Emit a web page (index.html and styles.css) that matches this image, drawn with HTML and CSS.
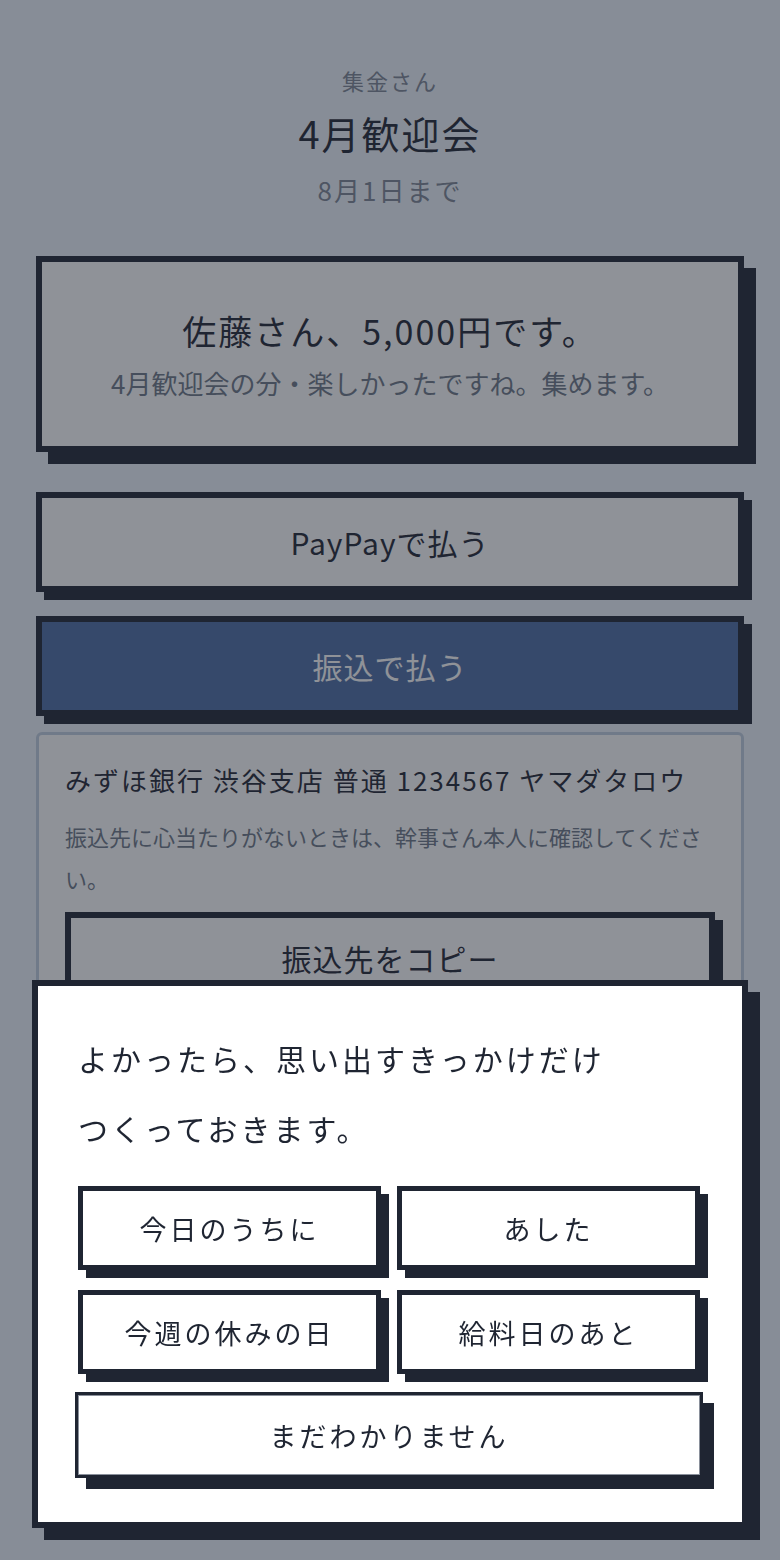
FILE: index.html
```html
<!DOCTYPE html>
<html lang="ja">
<head>
<meta charset="UTF-8">
<meta name="viewport" content="width=device-width, initial-scale=1.0">
<title>集金さん - 4月歓迎会</title>
<link rel="stylesheet" href="styles.css">
</head>
<body>
    <main class="page">
        <header class="head">
            <p class="eyebrow">集金さん</p>
            <h1 class="title">4月歓迎会</h1>
            <p class="deadline">8月1日まで</p>
        </header>

        <section class="bill">
            <p class="bill-amount">佐藤さん、5,000円です。</p>
            <p class="bill-note">4月歓迎会の分・楽しかったですね。集めます。</p>
        </section>

        <button class="btn">PayPayで払う</button>
        <button class="btn btn-primary">振込で払う</button>

        <div class="bank">
            <p class="bank-account">みずほ銀行 渋谷支店 普通 1234567 ヤマダタロウ</p>
            <p class="bank-hint">振込先に心当たりがないときは、幹事さん本人に確認してください。</p>
            <button class="btn btn-copy">振込先をコピー</button>
        </div>
    </main>

    <div class="overlay"></div>

    <div class="sheet">
        <p class="sheet-text">よかったら、思い出すきっかけだけ<br>つくっておきます。</p>
        <div class="choices">
            <button class="choice">今日のうちに</button>
            <button class="choice">あした</button>
            <button class="choice">今週の休みの日</button>
            <button class="choice">給料日のあと</button>
            <button class="choice choice-wide">まだわかりません</button>
        </div>
    </div>
</body>
</html>
```

FILE: styles.css
```css
body {
    font-family: "Noto Sans CJK JP", "Noto Sans", sans-serif;
    background: #eff5fc;
    color: #1f2532;
    margin: 0;
    padding: 0;
}
p, h1 {
    margin: 0;
}
.page {
    padding: 64px 36px 80px;
}
.head {
    text-align: center;
}
.eyebrow {
    font-size: 22px;
    line-height: 32px;
    letter-spacing: 2px;
    color: #7d8594;
}
.title {
    margin-top: 11px;
    font-size: 38px;
    line-height: 52px;
    font-weight: 400;
    letter-spacing: 2px;
}
.deadline {
    margin-top: 13px;
    font-size: 26px;
    line-height: 36px;
    letter-spacing: 2px;
    color: #7d8594;
}
.bill {
    margin-top: 48px;
    background: #fff;
    border: 6px solid #1f2532;
    box-shadow: 12px 12px 0 #1f2532;
    padding: 45px 24px;
    text-align: center;
}
.bill-amount {
    font-size: 34px;
    line-height: 48px;
    letter-spacing: 2px;
}
.bill-note {
    margin-top: 10px;
    font-size: 26px;
    line-height: 36px;
    color: #6d7786;
}
.btn {
    display: block;
    width: 100%;
    height: 100px;
    margin: 40px 0 0;
    background: #fff;
    border: 6px solid #1f2532;
    box-shadow: 8px 8px 0 #1f2532;
    font-family: inherit;
    font-size: 30px;
    letter-spacing: 1px;
    color: #1f2532;
    cursor: pointer;
}
.btn-primary {
    margin-top: 24px;
    background: #4d6da4;
    color: #fff;
}
.bank {
    margin-top: 16px;
    background: #fff;
    border: 3px solid #c1cfe0;
    border-radius: 6px;
    padding: 25px 26px 26px;
}
.bank-account {
    font-size: 26px;
    line-height: 40px;
    letter-spacing: 2px;
}
.bank-hint {
    margin-top: 15px;
    font-size: 22px;
    line-height: 42px;
    color: #6d7786;
}
.btn-copy {
    margin-top: 13px;
    padding-bottom: 10px;
}
.overlay {
    position: fixed;
    inset: 0;
    background: rgba(31, 37, 50, 0.5);
}
.sheet {
    position: fixed;
    left: 32px;
    right: 32px;
    bottom: 32px;
    box-sizing: border-box;
    height: 548px;
    background: #fff;
    border: 6px solid #1f2532;
    box-shadow: 12px 12px 0 #1f2532;
    padding: 37px 42px 0 40px;
}
.sheet-text {
    font-size: 30px;
    line-height: 70px;
    letter-spacing: 3px;
}
.choices {
    margin-top: 23px;
    display: grid;
    grid-template-columns: 1fr 1fr;
    gap: 20px 16px;
}
.choice {
    height: 84px;
    background: #fff;
    border: 5px solid #1f2532;
    box-shadow: 8px 8px 0 #1f2532;
    font-family: inherit;
    font-size: 27px;
    letter-spacing: 3px;
    color: #1f2532;
    cursor: pointer;
}
.choice-wide {
    grid-column: 1 / -1;
    height: 86px;
    margin: -2px -3px 0;
    border-width: 3px;
    box-shadow: inset 0 0 0 1px #8a909b, 11px 11px 0 #1f2532;
}
```
